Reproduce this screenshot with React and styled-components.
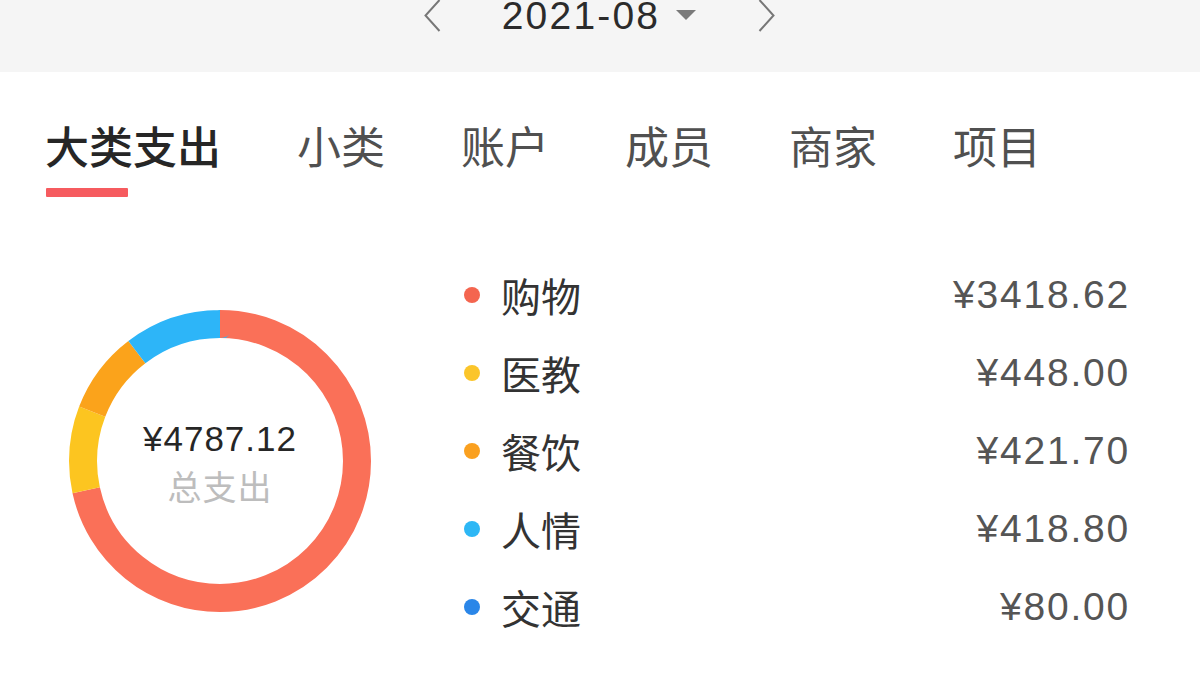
import React from "react";
import styled, { createGlobalStyle } from "styled-components";

const Global = createGlobalStyle`
  html, body { margin: 0; padding: 0; background: #ffffff; }
  body {
    width: 1200px; height: 678px; overflow: hidden;
    font-family: "Liberation Sans", "Noto Sans CJK SC", sans-serif;
  }
`;

const Page = styled.div`
  width: 1200px;
  height: 678px;
  display: flex;
  flex-direction: column;
  background: #fff;
`;

const Header = styled.header`
  height: 72px;
  flex: none;
  background: #f5f5f5;
  display: flex;
  justify-content: center;
  align-items: flex-start;
`;

const MonthRow = styled.div`
  height: 32px;
  display: flex;
  align-items: center;
`;

const Chevron = styled.svg`
  width: 18px;
  height: 32px;
  flex: none;
  margin-left: ${(p) => p.$ml || 0}px;
`;

const MonthText = styled.span`
  font-family: "Liberation Sans", "Noto Sans", sans-serif;
  font-size: 39px;
  line-height: 32px;
  letter-spacing: 2.2px;
  color: #2b2b2b;
  margin-left: 60px;
`;

const Caret = styled.span`
  width: 0;
  height: 0;
  border-left: 10px solid transparent;
  border-right: 10px solid transparent;
  border-top: 10px solid #7a7a7a;
  margin-left: 16px;
  margin-top: -2px;
`;

const Tabs = styled.nav`
  display: flex;
  gap: 76px;
  padding: 0 0 0 45px;
  margin-top: 51px;
  height: 76px;
  flex: none;
`;

const Tab = styled.div`
  display: flex;
  flex-direction: column;
  align-items: flex-start;
`;

const TabLabel = styled.span`
  font-family: "Noto Sans CJK SC", sans-serif;
  font-size: 44px;
  line-height: 44px;
  color: ${(p) => (p.$active ? "#262626" : "#505050")};
  font-weight: ${(p) => (p.$active ? 500 : 400)};
`;

const Underline = styled.span`
  width: 82px;
  height: 9px;
  margin-left: 1px;
  margin-top: 21px;
  background: #f65b5f;
  border-radius: 1px;
`;

const Content = styled.section`
  display: flex;
  align-items: flex-start;
  padding: 0 72px 0 69px;
  margin-top: 57px;
`;

const DonutWrap = styled.div`
  position: relative;
  width: 302px;
  height: 302px;
  flex: none;
  margin-top: 54px;
`;

const DonutSvg = styled.svg`
  width: 302px;
  height: 302px;
  display: block;
`;

const DonutCenter = styled.div`
  position: absolute;
  inset: 0;
  display: flex;
  flex-direction: column;
  align-items: center;
  justify-content: center;
  padding-top: 2px;
`;

const Total = styled.span`
  font-family: "Liberation Sans", "Noto Sans", sans-serif;
  font-size: 35px;
  line-height: 40px;
  letter-spacing: 1px;
  color: #262626;
`;

const TotalLabel = styled.span`
  font-family: "Noto Sans CJK SC", sans-serif;
  font-size: 34px;
  line-height: 40px;
  color: #bdbdbd;
  margin-top: 7px;
  letter-spacing: 1px;
`;

const Legend = styled.ul`
  list-style: none;
  margin: 0 0 0 93px;
  padding: 0;
  flex: 1;
  display: flex;
  flex-direction: column;
`;

const Row = styled.li`
  height: 78px;
  display: flex;
  align-items: center;
`;

const Dot = styled.span`
  width: 16px;
  height: 16px;
  border-radius: 50%;
  background: ${(p) => p.$color};
  flex: none;
`;

const Label = styled.span`
  font-family: "Noto Sans CJK SC", sans-serif;
  font-size: 40px;
  line-height: 44px;
  color: #333;
  margin-left: 21px;
`;

const Amount = styled.span`
  margin-left: auto;
  font-family: "Liberation Sans", "Noto Sans", sans-serif;
  font-size: 39px;
  line-height: 44px;
  letter-spacing: 1.8px;
  color: #555;
  margin-right: -2px;
`;

const items = [
  { name: "购物", value: "¥3418.62", color: "#f4654f" },
  { name: "医教", value: "¥448.00", color: "#fbc52a" },
  { name: "餐饮", value: "¥421.70", color: "#faa01f" },
  { name: "人情", value: "¥418.80", color: "#2db7f5" },
  { name: "交通", value: "¥80.00", color: "#2a86e8" },
];

const segments = [
  { from: 0, to: 257.5, color: "#fa7058" },
  { from: 257.5, to: 291, color: "#fcc520" },
  { from: 291, to: 322.5, color: "#fba31b" },
  { from: 322.5, to: 360, color: "#2db5f8" },
];

const R = 137;
const C = 2 * Math.PI * R;

function Donut() {
  return (
    <DonutSvg viewBox="0 0 302 302">
      <g transform="rotate(-90 151 151)">
        {segments.map((s, i) => {
          const len = ((s.to - s.from) / 360) * C;
          const off = -((s.from / 360) * C);
          return (
            <circle
              key={i}
              cx="151"
              cy="151"
              r={R}
              fill="none"
              stroke={s.color}
              strokeWidth="28"
              strokeDasharray={`${len} ${C - len}`}
              strokeDashoffset={off}
            />
          );
        })}
      </g>
    </DonutSvg>
  );
}

const tabs = ["大类支出", "小类", "账户", "成员", "商家", "项目"];

export default function App() {
  return (
    <Page>
      <Global />
      <Header>
        <MonthRow>
          <Chevron viewBox="0 0 18 32">
            <path d="M15.5 0 L1.5 15.5 L15.5 31" fill="none" stroke="#777" strokeWidth="2" />
          </Chevron>
          <MonthText>2021-08</MonthText>
          <Caret />
          <Chevron viewBox="0 0 18 32" $ml={62}>
            <path d="M1.5 0 L15.5 15.5 L1.5 31" fill="none" stroke="#777" strokeWidth="2" />
          </Chevron>
        </MonthRow>
      </Header>
      <Tabs>
        {tabs.map((t, i) => (
          <Tab key={t}>
            <TabLabel $active={i === 0}>{t}</TabLabel>
            {i === 0 && <Underline />}
          </Tab>
        ))}
      </Tabs>
      <Content>
        <DonutWrap>
          <Donut />
          <DonutCenter>
            <Total>¥4787.12</Total>
            <TotalLabel>总支出</TotalLabel>
          </DonutCenter>
        </DonutWrap>
        <Legend>
          {items.map((it) => (
            <Row key={it.name}>
              <Dot $color={it.color} />
              <Label>{it.name}</Label>
              <Amount>{it.value}</Amount>
            </Row>
          ))}
        </Legend>
      </Content>
    </Page>
  );
}
